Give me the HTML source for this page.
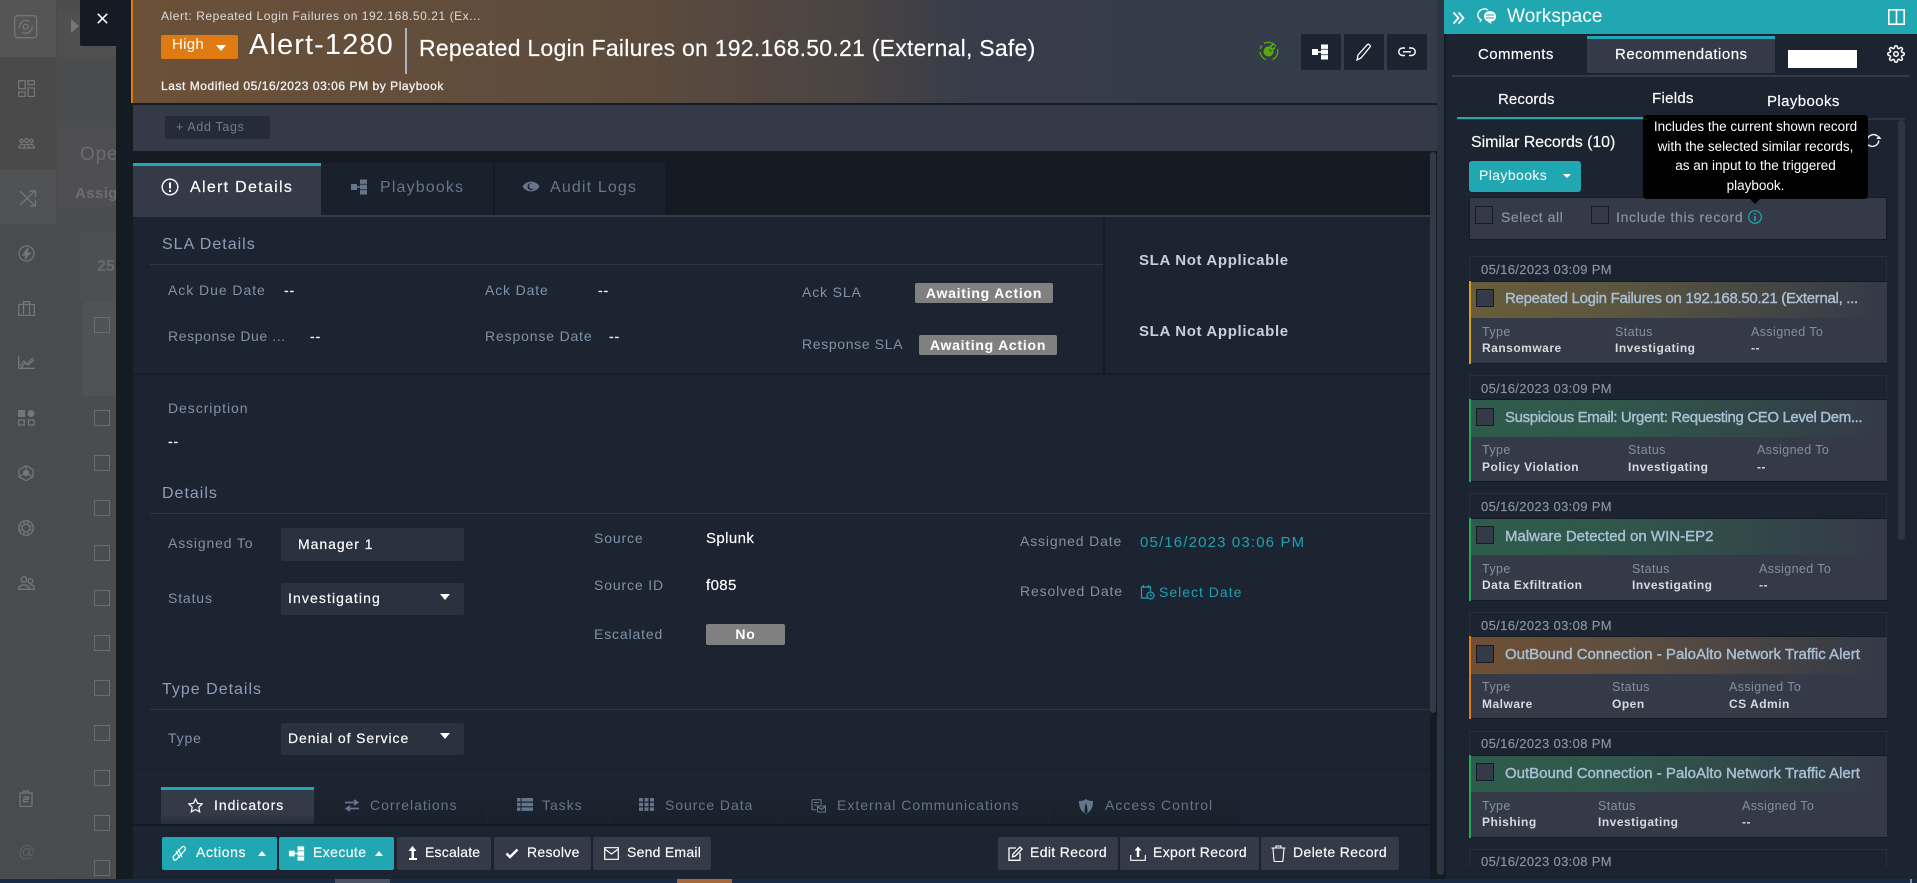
<!DOCTYPE html>
<html lang="en"><head><meta charset="utf-8"><title>Alert-1280</title>
<style>
html,body{margin:0;padding:0;width:1917px;height:883px;overflow:hidden;background:#141b23}
body{position:relative;font-family:"Liberation Sans",sans-serif;color:#fff}
.b,.t,svg{position:absolute}
.t{white-space:nowrap;line-height:20px;height:20px}
.l{font-size:14px;letter-spacing:.85px;color:#8191a6}
.v{font-size:14px;letter-spacing:.8px;color:#fff;-webkit-text-stroke:.15px #fff}
.h{font-size:16px;letter-spacing:1px;color:#8d9eb6}
.tb{font-size:16px;letter-spacing:1.15px;color:#66758a}
.tb2{font-size:14px;letter-spacing:.95px;color:#66758a}
.bd{background:#808080;border-radius:2px;font-size:14px;font-weight:bold;letter-spacing:.75px;text-align:center;line-height:20px;color:#fff}
.btn{background:#343a48;border-radius:2px;height:33px;top:837px}
.bt{font-size:14px;letter-spacing:.4px;color:#fff;top:842px;-webkit-text-stroke:.15px #fff}
.cb{width:14px;height:14px;border:1px solid #6c6d70}
.ck{width:16px;height:16px;border:1px solid #141b23;background:#343a48}
.d{font-size:13px;letter-spacing:.35px;color:#8a93a2;-webkit-text-stroke:.15px #8a93a2}
.ti{font-size:15px;letter-spacing:-.3px;color:#a9bfd3;-webkit-text-stroke:.4px #a9bfd3}
.cl{font-size:12.5px;letter-spacing:.4px;color:#868f9e}
.cv{font-size:12px;font-weight:bold;letter-spacing:.5px;color:#d5dae0}
.si{stroke:#75767a;fill:none;stroke-width:1.3}
</style></head><body>
<svg width="0" height="0" style="position:absolute"><defs>
<symbol id="tree" viewBox="0 0 20 20"><path fill="currentColor" d="M1 7h6v6H1zM7 9.3h4v1.4H7zM10 2.500h7v4.400h-7zM10 7.600h7v4.800h-7zM10 13.100h7v4.400h-7z"/></symbol>
</defs></svg>

<!-- dimmed background app -->
<div class="b" style="left:0;top:0;width:116px;height:879px;background:#4b4c4e"></div>
<div class="b" style="left:0;top:0;width:56px;height:57px;background:#555"></div>
<div class="b" style="left:0;top:57px;width:56px;height:113px;background:#4a4a4b"></div>
<div class="b" style="left:0;top:170px;width:56px;height:54px;background:#515253"></div>
<div class="b" style="left:0;top:224px;width:56px;height:655px;background:#4a4b4c"></div>
<div class="b" style="left:58px;top:11px;width:58px;height:46px;background:#505051"></div>
<div class="b" style="left:58px;top:127px;width:58px;height:80px;background:#4f4f51"></div>
<div class="b" style="left:80px;top:232px;width:36px;height:70px;background:#4e4f50"></div>
<div class="b" style="left:83px;top:302px;width:33px;height:94px;background:#515254"></div>
<div class="b" style="left:71px;top:19px;width:0;height:0;border-left:8px solid #747577;border-top:7px solid transparent;border-bottom:7px solid transparent"></div>
<div class="b" style="left:58px;top:130px;width:58px;height:90px;overflow:hidden">
 <div class="t" style="left:22px;top:13px;font-size:19px;letter-spacing:.8px;color:#6b6c6f;height:24px;line-height:24px">Open</div>
 <div class="t" style="left:17px;top:54px;font-size:15px;font-weight:bold;letter-spacing:.4px;color:#6d6e70">Assigned</div>
</div>
<div class="t" style="left:97px;top:257px;font-size:16px;font-weight:bold;color:#68696b">25</div>
<div class="b cb" style="left:94px;top:317px"></div><div class="b cb" style="left:94px;top:410px"></div>
<div class="b cb" style="left:94px;top:455px"></div><div class="b cb" style="left:94px;top:500px"></div>
<div class="b cb" style="left:94px;top:545px"></div><div class="b cb" style="left:94px;top:590px"></div>
<div class="b cb" style="left:94px;top:635px"></div><div class="b cb" style="left:94px;top:680px"></div>
<div class="b cb" style="left:94px;top:725px"></div><div class="b cb" style="left:94px;top:770px"></div>
<div class="b cb" style="left:94px;top:815px"></div><div class="b cb" style="left:94px;top:860px"></div>

<!-- sidebar icons -->
<svg style="left:14px;top:15px" width="24" height="24" viewBox="0 0 24 24" class="si"><rect x=".7" y=".7" width="22" height="22" rx="3"/><circle cx="11.7" cy="11.7" r="2.500"/><path d="M5.500 13a6.500 6.500 0 0 1 10-6.500M18 10.500a6.500 6.500 0 0 1-10 6.500"/></svg>
<svg style="left:18px;top:80px" width="17" height="17" viewBox="0 0 17 17" class="si"><rect x=".7" y=".7" width="6.500" height="8"/><rect x="10" y=".7" width="6.500" height="4"/><rect x=".7" y="12" width="6.500" height="4.500"/><rect x="10" y="8" width="6.500" height="8.500"/></svg>
<svg style="left:18px;top:138px" width="17" height="11" viewBox="0 0 17 11" class="si"><circle cx="3.500" cy="3" r="1.700"/><circle cx="8.500" cy="2.500" r="1.900"/><circle cx="13.500" cy="3" r="1.700"/><path d="M.7 10c0-4 5-4 5.500-3M6 10c0-5 5-5 5 0M11 7c1-1 5-1 5.500 3M.7 10h15.800"/></svg>
<svg style="left:19px;top:189px" width="18" height="18" viewBox="0 0 18 18" class="si"><path d="M1 2l15 15M1 16L16 2M10 2h6.500v6M16.500 11v6H11"/></svg>
<svg style="left:18px;top:245px" width="17" height="17" viewBox="0 0 17 17" class="si"><circle cx="8.500" cy="8.500" r="7.500"/><path d="M10 3L5 10h3.500L7 14l5-6H8.700z" fill="#75767a"/></svg>
<svg style="left:18px;top:301px" width="17" height="15" viewBox="0 0 17 15" class="si"><rect x=".7" y="3.500" width="15.600" height="11"/><path d="M5.500 3.500V.7h6v2.800M5.500 3.500v11M11.500 3.500v11"/></svg>
<svg style="left:18px;top:356px" width="17" height="13" viewBox="0 0 17 13" class="si"><path d="M.7 0v12.300h16M2 10l4-5 3 3 6-6M3 12l4-5 3 2 6-5"/></svg>
<svg style="left:18px;top:410px" width="17" height="16" viewBox="0 0 17 16" class="si"><rect x="0" y="0" width="7" height="7" fill="#75767a" stroke="none"/><circle cx="13" cy="3.500" r="3.500" fill="#75767a" stroke="none"/><rect x=".7" y="10" width="5.500" height="5"/><rect x="10.500" y="10" width="5.500" height="5"/></svg>
<svg style="left:18px;top:465px" width="16" height="16" viewBox="0 0 16 16" class="si"><path d="M8 .7l7 4v7l-7 4-7-4v-7z"/><circle cx="8" cy="8" r="2.500" fill="#75767a"/><path d="M8 .7v5M1 12l4.500-3M15 12l-4.500-3"/></svg>
<svg style="left:18px;top:520px" width="16" height="16" viewBox="0 0 16 16" class="si"><circle cx="8" cy="8" r="7.300"/><circle cx="8" cy="8" r="3.800"/><path d="M6 .9v3.400M10 .9v3.400M6 11.700v3.400M10 11.700v3.400M.9 6h3.400M.9 10h3.400M11.700 6h3.400M11.700 10h3.400"/></svg>
<svg style="left:18px;top:576px" width="17" height="14" viewBox="0 0 17 14" class="si"><circle cx="6" cy="3.500" r="2.800"/><circle cx="12.500" cy="5" r="2.300"/><path d="M.7 13.300c0-6 10.500-6 10.500 0zM11.500 9c3-1 5 1 5 4.300h-5"/></svg>
<svg style="left:19px;top:790px" width="14" height="17" viewBox="0 0 14 17" class="si"><path d="M1 3h12v12.500a1 1 0 0 1-1 1H2a1 1 0 0 1-1-1zM4.500 3V1h5v2M4.500 7h5v2.200h-5v2.500h5"/></svg>
<div class="t" style="left:18px;top:842px;font-size:17px;color:#5f6062">@</div>

<div class="b" style="left:116px;top:0;width:17px;height:879px;background:#141b23"></div>
<div class="b" style="left:80px;top:0;width:36px;height:46px;background:#141b23;border-radius:0 0 0 2px"></div>
<svg style="left:97px;top:13px" width="11" height="11" viewBox="0 0 11 11"><path d="M.8.8l9.400 9.400M10.200.8L.8 10.200" stroke="#fff" stroke-width="1.500"/></svg>

<!-- modal header -->
<div class="b" style="left:131px;top:0;width:1306px;height:103px;background:linear-gradient(90deg,#6b5138 0,#5c4b3d 39%,#4a4443 55%,#363c49 65%,#343b49 100%)"></div>
<div class="b" style="left:131px;top:0;width:2px;height:103px;background:#e07b14"></div>
<div class="b" style="left:131px;top:103px;width:1306px;height:2px;background:#141b23"></div>
<div class="t" style="left:161px;top:6px;font-size:12px;letter-spacing:.55px;color:#dcdcdc">Alert: Repeated Login Failures on 192.168.50.21 (Ex...</div>
<div class="b" style="left:161px;top:35px;width:77px;height:24px;background:#e07b14;border-radius:2px"></div>
<div class="t" style="left:172px;top:35px;font-size:15px;letter-spacing:.3px">High</div>
<div class="b" style="left:216px;top:45px;border-top:6px solid #fff;border-left:5px solid transparent;border-right:5px solid transparent"></div>
<div class="t" style="left:249px;top:28px;font-size:29px;letter-spacing:1.100px;height:34px;line-height:34px">Alert-1280</div>
<div class="b" style="left:405px;top:28px;width:2px;height:46px;background:#aab4c0"></div>
<div class="t" style="left:419px;top:34px;font-size:23px;letter-spacing:.25px;height:28px;line-height:28px;-webkit-text-stroke:.15px #fff">Repeated Login Failures on 192.168.50.21 (External, Safe)</div>
<div class="t" style="left:161px;top:76px;font-size:12px;letter-spacing:.55px;color:#eee;-webkit-text-stroke:.35px #eee">Last Modified 05/16/2023 03:06 PM by Playbook</div>
<svg style="left:1259px;top:41px" width="20" height="20" viewBox="0 0 20 20"><path d="M5 2.500a9 9 0 0 1 12 3M18.500 8a9 9 0 0 1-5 10.500M7 18.500a9 9 0 0 1-6-7.500M1.200 8A9 9 0 0 1 3 4.500" stroke="#5aa80f" stroke-width="1.300" fill="none"/><circle cx="9.500" cy="10.500" r="5" fill="#5aa80f"/><path d="M11 6l3-2.500M13.500 8.500L16 6.500" stroke="#5aa80f" stroke-width="2"/><path d="M10.500 8.500l2 2" stroke="#343b49" stroke-width="1.200"/></svg>
<div class="b" style="left:1301px;top:34px;width:40px;height:36px;background:#1c2431;border-radius:2px"></div>
<div class="b" style="left:1344px;top:34px;width:40px;height:36px;background:#1c2431;border-radius:2px"></div>
<div class="b" style="left:1387px;top:34px;width:40px;height:36px;background:#1c2431;border-radius:2px"></div>
<svg style="left:1311px;top:42px;color:#fff" width="20" height="20"><use href="#tree"/></svg>
<svg style="left:1356px;top:43px" width="17" height="18" viewBox="0 0 17 18"><path d="M2 12L11.500 1.500c1-1 3.500 1 2.500 2.500L5 15l-4 2z" fill="none" stroke="#fff" stroke-width="1.300"/></svg>
<svg style="left:1398px;top:46px" width="18" height="12" viewBox="0 0 18 12"><path d="M7 2H4.500a3.500 3.500 0 0 0 0 7.500H7M11 2h2.500a3.500 3.500 0 0 1 0 7.500H11M5 5.800h8" fill="none" stroke="#fff" stroke-width="1.400"/></svg>

<!-- tags bar -->
<div class="b" style="left:133px;top:105px;width:1304px;height:46px;background:#343a48"></div>
<div class="b" style="left:165px;top:116px;width:105px;height:23px;background:#252c38;border-radius:2px"></div>
<div class="t" style="left:176px;top:117px;font-size:12.500px;letter-spacing:.65px;color:#6c7a8d">+ Add Tags</div>

<!-- tabs -->
<div class="b" style="left:133px;top:151px;width:1297px;height:66px;background:#141b23"></div>
<div class="b" style="left:133px;top:163px;width:188px;height:52px;background:#343a48;border-top:3px solid #21a7b1;box-sizing:border-box"></div>
<div class="b" style="left:321px;top:163px;width:172px;height:52px;background:#19212c"></div>
<div class="b" style="left:495px;top:163px;width:170px;height:52px;background:#19212c"></div>
<div class="b" style="left:133px;top:215px;width:1297px;height:2px;background:#343a48"></div>
<svg style="left:161px;top:178px" width="18" height="18" viewBox="0 0 18 18"><circle cx="9" cy="9" r="7.800" fill="none" stroke="#fff" stroke-width="1.400"/><path d="M5 4v10M13 4v10" stroke="#343a48" stroke-width="2"/><path d="M9 4.500v6M9 12v2" stroke="#fff" stroke-width="2"/></svg>
<div class="t" style="left:190px;top:178px;font-size:16px;letter-spacing:1.300px;-webkit-text-stroke:.15px #fff">Alert Details</div>
<svg style="left:350px;top:177px;color:#66758a" width="20" height="20"><use href="#tree"/></svg>
<div class="t tb" style="left:380px;top:178px">Playbooks</div>
<svg style="left:522px;top:180px" width="18" height="13" viewBox="0 0 18 13"><path d="M.5 6.500C4 0 14 0 17.500 6.500 14 13 4 13 .5 6.500z" fill="#66758a"/><circle cx="9" cy="6.500" r="3.500" fill="#19212c"/><circle cx="10" cy="6" r="3" fill="#66758a"/></svg>
<div class="t tb" style="left:550px;top:178px">Audit Logs</div>

<!-- scrollable content -->
<div class="b" style="left:133px;top:217px;width:1297px;height:608px;background:#1c2431"></div>
<div class="b" style="left:150px;top:264px;width:953px;height:1px;background:#2e3744"></div>
<div class="b" style="left:1103px;top:218px;width:2px;height:155px;background:#141b23"></div>
<div class="b" style="left:133px;top:373px;width:1297px;height:2px;background:#151c26"></div>
<div class="t h" style="left:162px;top:235px">SLA Details</div>
<div class="t l" style="left:168px;top:280px;letter-spacing:.95px">Ack Due Date</div><div class="t v" style="left:284px;top:280px">--</div>
<div class="t l" style="left:485px;top:280px">Ack Date</div><div class="t v" style="left:598px;top:280px">--</div>
<div class="t l" style="left:802px;top:282px">Ack SLA</div>
<div class="b bd" style="left:915px;top:283px;width:138px;height:20px">Awaiting Action</div>
<div class="t l" style="left:168px;top:326px;letter-spacing:.6px">Response Due ...</div><div class="t v" style="left:310px;top:326px">--</div>
<div class="t l" style="left:485px;top:326px">Response Date</div><div class="t v" style="left:609px;top:326px">--</div>
<div class="t l" style="left:802px;top:334px;letter-spacing:.65px">Response SLA</div>
<div class="b bd" style="left:919px;top:335px;width:138px;height:20px">Awaiting Action</div>
<div class="t" style="left:1139px;top:251px;font-size:15px;font-weight:bold;letter-spacing:.65px;color:#c6d0dc">SLA Not Applicable</div>
<div class="t" style="left:1139px;top:322px;font-size:15px;font-weight:bold;letter-spacing:.65px;color:#c6d0dc">SLA Not Applicable</div>
<div class="t l" style="left:168px;top:398px;letter-spacing:.95px">Description</div>
<div class="t v" style="left:168px;top:431px">--</div>
<div class="t h" style="left:162px;top:484px">Details</div>
<div class="b" style="left:150px;top:513px;width:1280px;height:1px;background:#2e3744"></div>
<div class="t l" style="left:168px;top:533px">Assigned To</div>
<div class="b" style="left:281px;top:528px;width:183px;height:33px;background:#2a3240;border-radius:2px"></div>
<div class="t v" style="left:298px;top:534px;letter-spacing:.95px">Manager 1</div>
<div class="t l" style="left:168px;top:588px">Status</div>
<div class="b" style="left:281px;top:583px;width:183px;height:32px;background:#2a3240;border-radius:2px"></div>
<div class="t v" style="left:288px;top:588px;letter-spacing:1.1px">Investigating</div>
<div class="b" style="left:440px;top:594px;border-top:6px solid #fff;border-left:5px solid transparent;border-right:5px solid transparent"></div>
<div class="t l" style="left:594px;top:528px">Source</div><div class="t v" style="left:706px;top:529px;font-size:15px;letter-spacing:.4px">Splunk</div>
<div class="t l" style="left:594px;top:575px">Source ID</div><div class="t v" style="left:706px;top:576px;font-size:15px;letter-spacing:.4px">f085</div>
<div class="t l" style="left:594px;top:624px">Escalated</div>
<div class="b bd" style="left:706px;top:624px;width:79px;height:21px;line-height:21px">No</div>
<div class="t l" style="left:1020px;top:531px">Assigned Date</div>
<div class="t" style="left:1140px;top:533px;font-size:15px;letter-spacing:1.15px;color:#21a0b0">05/16/2023 03:06 PM</div>
<div class="t l" style="left:1020px;top:581px">Resolved Date</div>
<svg style="left:1140px;top:584px" width="15" height="17" viewBox="0 0 15 17"><path d="M8 14H1.500V3h9v4M3.500 1v3M8.500 1v3" fill="none" stroke="#21a0b0" stroke-width="1.200"/><circle cx="10.500" cy="11.500" r="3.500" fill="none" stroke="#21a0b0" stroke-width="1.200"/><path d="M10.500 9.800v2h1.500" fill="none" stroke="#21a0b0"/></svg>
<div class="t" style="left:1159px;top:582px;font-size:14px;letter-spacing:1px;color:#21a0b0">Select Date</div>
<div class="t h" style="left:162px;top:680px">Type Details</div>
<div class="b" style="left:150px;top:709px;width:1280px;height:1px;background:#2e3744"></div>
<div class="t l" style="left:168px;top:728px">Type</div>
<div class="b" style="left:281px;top:723px;width:183px;height:32px;background:#2a3240;border-radius:2px"></div>
<div class="t v" style="left:288px;top:728px;letter-spacing:.9px">Denial of Service</div>
<div class="b" style="left:440px;top:733px;border-top:6px solid #fff;border-left:5px solid transparent;border-right:5px solid transparent"></div>
<div class="b" style="left:133px;top:769px;width:1297px;height:1px;background:#171e29"></div>

<!-- lower tabs -->
<div class="b" style="left:314px;top:787px;width:172px;height:37px;background:linear-gradient(#1c2431,#19212c)"></div>
<div class="b" style="left:488px;top:787px;width:121px;height:37px;background:linear-gradient(#1c2431,#19212c)"></div>
<div class="b" style="left:611px;top:787px;width:171px;height:37px;background:linear-gradient(#1c2431,#19212c)"></div>
<div class="b" style="left:783px;top:787px;width:265px;height:37px;background:linear-gradient(#1c2431,#19212c)"></div>
<div class="b" style="left:1050px;top:787px;width:190px;height:37px;background:linear-gradient(#1c2431,#19212c)"></div>
<div class="b" style="left:161px;top:787px;width:153px;height:37px;background:linear-gradient(#343a48 70%,#272e3b);border-top:3px solid #21a7b1;box-sizing:border-box"></div>
<svg style="left:188px;top:798px" width="15" height="15" viewBox="0 0 15 15"><path d="M7.500 1l2 4.300 4.700.6-3.400 3.200.9 4.700-4.200-2.300-4.200 2.300.9-4.700L.8 5.900l4.700-.6z" fill="none" stroke="#fff" stroke-width="1.200"/></svg>
<div class="t" style="left:214px;top:795px;font-size:14px;letter-spacing:.95px;-webkit-text-stroke:.15px #fff">Indicators</div>
<svg style="left:344px;top:799px" width="16" height="13" viewBox="0 0 16 13"><path d="M1 3.500h12M10 1l3.500 2.500L10 6M15 9.500H3M6 7L2.500 9.500 6 12" fill="none" stroke="#66758a" stroke-width="1.800"/></svg>
<div class="t tb2" style="left:370px;top:795px;letter-spacing:1px">Correlations</div>
<svg style="left:517px;top:798px" width="16" height="13" viewBox="0 0 16 13"><path fill="#66758a" d="M0 0h3.500v3.500H0zM4.500 0H16v3.500H4.500zM0 4.700h3.500v3.500H0zM4.500 4.700H16v3.500H4.500zM0 9.400h3.500v3.500H0zM4.500 9.400H16v3.500H4.500z"/></svg>
<div class="t tb2" style="left:542px;top:795px">Tasks</div>
<svg style="left:639px;top:798px" width="15" height="13" viewBox="0 0 15 13"><path fill="#66758a" d="M0 0h4v3.500H0zM5.500 0h4v3.500h-4zM11 0h4v3.500h-4zM0 4.700h4v3.500H0zM5.500 4.700h4v3.500h-4zM11 4.700h4v3.500h-4zM0 9.400h4v3.500H0zM5.500 9.400h4v3.500h-4zM11 9.400h4v3.500h-4z"/></svg>
<div class="t tb2" style="left:665px;top:795px">Source Data</div>
<svg style="left:811px;top:799px" width="15" height="14" viewBox="0 0 15 14"><path d="M1 .7h9v5M1 .7v10h4M3 3.500h5M3 6h3M6.500 7h8v6h-8zM6.500 7.500l4 3 4-3" fill="none" stroke="#66758a" stroke-width="1.100"/></svg>
<div class="t tb2" style="left:837px;top:795px;letter-spacing:1px">External Communications</div>
<svg style="left:1078px;top:799px" width="16" height="15" viewBox="0 0 16 15"><path d="M1 2c3 0 5-.5 7-2 2 1.500 4 2 7 2 0 5-1 10-7 13C2 12 1 7 1 2z" fill="#66758a"/><path d="M8 4c1 2 1.500 6 1.500 10h-3C6.500 10 7 6 8 4z" fill="#19212c"/></svg>
<div class="t tb2" style="left:1105px;top:795px;letter-spacing:1px">Access Control</div>

<!-- footer -->
<div class="b" style="left:133px;top:824px;width:1297px;height:2px;background:#141b23"></div>
<div class="b" style="left:133px;top:826px;width:1297px;height:53px;background:#1c2431"></div>
<div class="b btn" style="left:162px;width:115px;background:#21a7b1"></div>
<svg style="left:171px;top:844px" width="17" height="19" viewBox="0 0 17 19"><path d="M3 16l-1-3 9-10c2-2 4 1 3 3L5 16zM7 5l4 8M5 7l4 7" fill="none" stroke="#fff" stroke-width="1.200"/></svg>
<div class="t bt" style="left:196px;letter-spacing:.6px">Actions</div>
<div class="b" style="left:258px;top:851px;border-bottom:5px solid #fff;border-left:4px solid transparent;border-right:4px solid transparent"></div>
<div class="b btn" style="left:279px;width:115px;background:#21a7b1"></div>
<svg style="left:288px;top:844px;color:#fff" width="19" height="19"><use href="#tree"/></svg>
<div class="t bt" style="left:313px">Execute</div>
<div class="b" style="left:375px;top:851px;border-bottom:5px solid #fff;border-left:4px solid transparent;border-right:4px solid transparent"></div>
<div class="b btn" style="left:397px;width:94px"></div>
<svg style="left:407px;top:846px" width="11" height="15" viewBox="0 0 11 15"><path d="M5.500 0l4 5H7v7h3v2H2v-2h2.500V5H1.500z" fill="#fff"/></svg>
<div class="t bt" style="left:425px;letter-spacing:.2px">Escalate</div>
<div class="b btn" style="left:494px;width:97px"></div>
<svg style="left:505px;top:848px" width="14" height="11" viewBox="0 0 14 11"><path d="M1.500 5.500l3.500 3.500 7.500-7.500" fill="none" stroke="#fff" stroke-width="2.500"/></svg>
<div class="t bt" style="left:527px;letter-spacing:.3px">Resolve</div>
<div class="b btn" style="left:593px;width:118px"></div>
<svg style="left:604px;top:847px" width="15" height="13" viewBox="0 0 15 13"><path d="M.7.7h13.600v11.600H.7zM.7 2l6.800 5 6.800-5" fill="none" stroke="#fff" stroke-width="1.200"/></svg>
<div class="t bt" style="left:627px;letter-spacing:.25px">Send Email</div>
<div class="b btn" style="left:998px;width:120px"></div>
<svg style="left:1008px;top:846px" width="15" height="15" viewBox="0 0 15 15"><path d="M8 2H1v12.300h11V7M5 8l-.5 2.800L7.300 10 14 3l-2-2z" fill="none" stroke="#fff" stroke-width="1.300"/></svg>
<div class="t bt" style="left:1030px;letter-spacing:.35px">Edit Record</div>
<div class="b btn" style="left:1120px;width:139px"></div>
<svg style="left:1130px;top:846px" width="16" height="15" viewBox="0 0 16 15"><path d="M.7 9v5.300h14.600V9" fill="none" stroke="#fff" stroke-width="1.100"/><path d="M8 .5l3.500 4H9.200V11H6.800V4.500H4.500z" fill="#fff"/></svg>
<div class="t bt" style="left:1153px;letter-spacing:.35px">Export Record</div>
<div class="b btn" style="left:1261px;width:138px"></div>
<svg style="left:1271px;top:845px" width="15" height="17" viewBox="0 0 15 17"><path d="M.5 3h14M5 3V1h5v2M2 3l1 12.500c0 .5.500 1 1 1h7c.5 0 1-.5 1-1L13 3" fill="none" stroke="#fff" stroke-width="1.100"/></svg>
<div class="t bt" style="left:1293px;letter-spacing:.35px">Delete Record</div>

<!-- scrollbars -->
<div class="b" style="left:1430px;top:152px;width:6px;height:561px;background:#343a48;border-radius:3px"></div>
<div class="b" style="left:1430px;top:103px;width:7px;height:2px;background:#141b23"></div>
<div class="b" style="left:1437px;top:0;width:7px;height:875px;background:#2d3543;border-radius:0 0 4px 4px"></div>

<!-- workspace panel -->
<div class="b" style="left:1444px;top:0;width:473px;height:879px;background:#1c2431"></div>
<div class="b" style="left:1444px;top:34px;width:2px;height:845px;background:#141b23"></div>
<div class="b" style="left:1444px;top:0;width:473px;height:34px;background:#21a7b1"></div>
<svg style="left:1452px;top:11px" width="13" height="14" viewBox="0 0 13 14"><path d="M1.500 1.500L6.500 7l-5 5.500M6.500 1.500l5 5.500-5 5.500" fill="none" stroke="#fff" stroke-width="1.800"/></svg>
<svg style="left:1477px;top:8px" width="20" height="17" viewBox="0 0 20 17"><path d="M5 12C1 11 0 7 1.500 4.500 3.500 1 8 0 11 2M3 14l1-3" fill="none" stroke="#fff" stroke-width="1.400"/><path d="M7 8c0-3 3-5 6-5s6 2 6 5.500c0 3-2 5-5 5 0 1 1 2 1 2s-3 0-4-2C9 13 7 11 7 8z" fill="#fff"/><path d="M9 7h8M9 10h8" stroke="#21a7b1"/></svg>
<div class="t" style="left:1507px;top:5px;font-size:19px;letter-spacing:.1px;height:24px;line-height:24px">Workspace</div>
<svg style="left:1888px;top:9px" width="17" height="16" viewBox="0 0 17 16"><path d="M.8.8h15.400v14.400H.8zM8.500.8v14.400" fill="none" stroke="#fff" stroke-width="1.600"/></svg>
<div class="b" style="left:1587px;top:36px;width:188px;height:37px;background:#343a48;border-top:3px solid #21a7b1;box-sizing:border-box"></div>
<div class="t" style="left:1478px;top:45px;font-size:15px;letter-spacing:.4px;-webkit-text-stroke:.15px #fff">Comments</div>
<div class="t" style="left:1615px;top:45px;font-size:15px;letter-spacing:.5px;-webkit-text-stroke:.15px #fff">Recommendations</div>
<div class="b" style="left:1788px;top:50px;width:69px;height:18px;background:#fff"></div>
<svg style="left:1887px;top:45px" width="18" height="18" viewBox="0 0 24 24"><path d="M12 15a3 3 0 1 0 0-6 3 3 0 0 0 0 6z" fill="none" stroke="#fff" stroke-width="2"/><path d="M19.400 15a1.700 1.700 0 0 0 .3 1.800l.1.100a2 2 0 1 1-2.800 2.800l-.1-.1a1.700 1.700 0 0 0-2.900 1.200V21a2 2 0 1 1-4 0v-.1a1.700 1.700 0 0 0-2.900-1.200l-.1.100a2 2 0 1 1-2.800-2.800l.1-.1a1.700 1.700 0 0 0-1.200-2.900H3a2 2 0 1 1 0-4h.1a1.700 1.700 0 0 0 1.200-2.900l-.1-.1a2 2 0 1 1 2.800-2.800l.1.100a1.700 1.700 0 0 0 1.900.3H9a1.700 1.700 0 0 0 1-1.500V3a2 2 0 1 1 4 0v.1a1.700 1.700 0 0 0 2.900 1.200l.1-.1a2 2 0 1 1 2.800 2.800l-.1.100a1.700 1.700 0 0 0 1.200 2.900h.1a2 2 0 1 1 0 4h-.1a1.700 1.700 0 0 0-1.500 1z" fill="none" stroke="#fff" stroke-width="2"/></svg>
<div class="b" style="left:1452px;top:75px;width:458px;height:2px;background:#343a48"></div>
<div class="t" style="left:1498px;top:90px;font-size:15px;letter-spacing:.1px;-webkit-text-stroke:.15px #fff">Records</div>
<div class="t" style="left:1652px;top:89px;font-size:15px;letter-spacing:.3px;-webkit-text-stroke:.15px #fff">Fields</div>
<div class="t" style="left:1767px;top:92px;font-size:15px;letter-spacing:.4px;-webkit-text-stroke:.15px #fff">Playbooks</div>
<div class="b" style="left:1457px;top:118px;width:448px;height:2px;background:#2d3543"></div>
<div class="b" style="left:1457px;top:117px;width:275px;height:2px;background:#21a7b1"></div>
<div class="b" style="left:1898px;top:120px;width:7px;height:420px;background:#2d3543;border-radius:4px"></div>
<div class="t" style="left:1471px;top:133px;font-size:16px;letter-spacing:-.08px;-webkit-text-stroke:.15px #fff">Similar Records (10)</div>
<svg style="left:1864px;top:132px" width="18" height="17" viewBox="0 0 17 16"><path d="M3 8a6 6 0 0 1 10-4M14 8a6 6 0 0 1-10 4" fill="none" stroke="#fff" stroke-width="1.300"/><path d="M11.500 6.500h5l-2.500-3z" fill="#fff"/></svg>
<div class="b" style="left:1469px;top:161px;width:112px;height:31px;background:#21a7b1;border-radius:3px"></div>
<div class="t" style="left:1479px;top:165px;font-size:14px;letter-spacing:.4px">Playbooks</div>
<div class="b" style="left:1563px;top:174px;border-top:4px solid #fff;border-left:4px solid transparent;border-right:4px solid transparent"></div>
<div class="b" style="left:1469px;top:197px;width:416px;height:41px;background:#343a48;border:1px solid #141b23"></div>
<div class="b ck" style="left:1475px;top:206px"></div>
<div class="t" style="left:1501px;top:207px;font-size:14px;letter-spacing:.55px;color:#8a93a2;-webkit-text-stroke:.2px #8a93a2">Select all</div>
<div class="b ck" style="left:1591px;top:206px"></div>
<div class="t" style="left:1616px;top:207px;font-size:14px;letter-spacing:.68px;color:#8a93a2;-webkit-text-stroke:.2px #8a93a2">Include this record</div>
<svg style="left:1748px;top:210px" width="14" height="14" viewBox="0 0 14 14"><circle cx="7" cy="7" r="6.300" fill="none" stroke="#21a7b1" stroke-width="1.200"/><path d="M7 6v5M7 3v1.500" stroke="#21a7b1" stroke-width="1.500"/></svg>

<!-- cards -->
<div class="b" style="left:1469px;top:256px;width:416px;height:25px;border:1px solid #272f3c;border-bottom:0"></div>
<div class="t d" style="left:1481px;top:260px">05/16/2023 03:09 PM</div>
<div class="b" style="left:1469px;top:281px;width:418px;height:83px;background:#343a48;border-top:1px solid #141b23;border-bottom:1px solid #141b23;box-sizing:border-box"></div>
<div class="b" style="left:1469px;top:282px;width:418px;height:36px;background:linear-gradient(90deg,#685d3b 0,#5c5640 35%,#343a48 98%)"></div>
<div class="b" style="left:1469px;top:281px;width:2px;height:83px;background:#d4a017"></div>
<div class="b ck" style="left:1476px;top:289px"></div>
<div class="t ti" style="left:1505px;top:289px">Repeated Login Failures on 192.168.50.21 (External, ...</div>
<div class="t cl" style="left:1482px;top:322px">Type</div><div class="t cv" style="left:1482px;top:338px">Ransomware</div>
<div class="t cl" style="left:1615px;top:322px">Status</div><div class="t cv" style="left:1615px;top:338px">Investigating</div>
<div class="t cl" style="left:1751px;top:322px">Assigned To</div><div class="t cv" style="left:1751px;top:338px">--</div>

<div class="b" style="left:1469px;top:375px;width:416px;height:24px;border:1px solid #272f3c;border-bottom:0"></div>
<div class="t d" style="left:1481px;top:379px">05/16/2023 03:09 PM</div>
<div class="b" style="left:1469px;top:399px;width:418px;height:83px;background:#343a48;border-top:1px solid #141b23;border-bottom:1px solid #141b23;box-sizing:border-box"></div>
<div class="b" style="left:1469px;top:400px;width:418px;height:37px;background:linear-gradient(90deg,#2e5c4c 0,#30574b 35%,#343a48 98%)"></div>
<div class="b" style="left:1469px;top:399px;width:2px;height:83px;background:#25a85a"></div>
<div class="b ck" style="left:1476px;top:408px"></div>
<div class="t ti" style="left:1505px;top:408px;letter-spacing:-.37px">Suspicious Email: Urgent: Requesting CEO Level Dem...</div>
<div class="t cl" style="left:1482px;top:440px">Type</div><div class="t cv" style="left:1482px;top:457px">Policy Violation</div>
<div class="t cl" style="left:1628px;top:440px">Status</div><div class="t cv" style="left:1628px;top:457px">Investigating</div>
<div class="t cl" style="left:1757px;top:440px">Assigned To</div><div class="t cv" style="left:1757px;top:457px">--</div>

<div class="b" style="left:1469px;top:493px;width:416px;height:25px;border:1px solid #272f3c;border-bottom:0"></div>
<div class="t d" style="left:1481px;top:497px">05/16/2023 03:09 PM</div>
<div class="b" style="left:1469px;top:518px;width:418px;height:83px;background:#343a48;border-top:1px solid #141b23;border-bottom:1px solid #141b23;box-sizing:border-box"></div>
<div class="b" style="left:1469px;top:519px;width:418px;height:36px;background:linear-gradient(90deg,#2e5c4c 0,#30574b 35%,#343a48 98%)"></div>
<div class="b" style="left:1469px;top:518px;width:2px;height:83px;background:#25a85a"></div>
<div class="b ck" style="left:1476px;top:526px"></div>
<div class="t ti" style="left:1505px;top:527px;letter-spacing:0">Malware Detected on WIN-EP2</div>
<div class="t cl" style="left:1482px;top:559px">Type</div><div class="t cv" style="left:1482px;top:575px">Data Exfiltration</div>
<div class="t cl" style="left:1632px;top:559px">Status</div><div class="t cv" style="left:1632px;top:575px">Investigating</div>
<div class="t cl" style="left:1759px;top:559px">Assigned To</div><div class="t cv" style="left:1759px;top:575px">--</div>

<div class="b" style="left:1469px;top:612px;width:416px;height:24px;border:1px solid #272f3c;border-bottom:0"></div>
<div class="t d" style="left:1481px;top:616px">05/16/2023 03:08 PM</div>
<div class="b" style="left:1469px;top:636px;width:418px;height:83px;background:#343a48;border-top:1px solid #141b23;border-bottom:1px solid #141b23;box-sizing:border-box"></div>
<div class="b" style="left:1469px;top:637px;width:418px;height:37px;background:linear-gradient(90deg,#6e4f35 0,#5f4f3f 35%,#343a48 98%)"></div>
<div class="b" style="left:1469px;top:636px;width:2px;height:83px;background:#e07b14"></div>
<div class="b ck" style="left:1476px;top:645px"></div>
<div class="t ti" style="left:1505px;top:645px;letter-spacing:0">OutBound Connection - PaloAlto Network Traffic Alert</div>
<div class="t cl" style="left:1482px;top:677px">Type</div><div class="t cv" style="left:1482px;top:694px">Malware</div>
<div class="t cl" style="left:1612px;top:677px">Status</div><div class="t cv" style="left:1612px;top:694px">Open</div>
<div class="t cl" style="left:1729px;top:677px">Assigned To</div><div class="t cv" style="left:1729px;top:694px">CS Admin</div>

<div class="b" style="left:1469px;top:731px;width:416px;height:25px;border:1px solid #272f3c;border-bottom:0"></div>
<div class="t d" style="left:1481px;top:734px">05/16/2023 03:08 PM</div>
<div class="b" style="left:1469px;top:755px;width:418px;height:83px;background:#343a48;border-top:1px solid #141b23;border-bottom:1px solid #141b23;box-sizing:border-box"></div>
<div class="b" style="left:1469px;top:756px;width:418px;height:36px;background:linear-gradient(90deg,#2e5c4c 0,#30574b 35%,#343a48 98%)"></div>
<div class="b" style="left:1469px;top:755px;width:2px;height:83px;background:#25a85a"></div>
<div class="b ck" style="left:1476px;top:763px"></div>
<div class="t ti" style="left:1505px;top:764px;letter-spacing:0">OutBound Connection - PaloAlto Network Traffic Alert</div>
<div class="t cl" style="left:1482px;top:796px">Type</div><div class="t cv" style="left:1482px;top:812px">Phishing</div>
<div class="t cl" style="left:1598px;top:796px">Status</div><div class="t cv" style="left:1598px;top:812px">Investigating</div>
<div class="t cl" style="left:1742px;top:796px">Assigned To</div><div class="t cv" style="left:1742px;top:812px">--</div>

<div class="b" style="left:1469px;top:849px;width:416px;height:17px;border:1px solid #272f3c;border-bottom:0;overflow:hidden">
 <div class="t d" style="left:11px;top:2px">05/16/2023 03:08 PM</div>
</div>

<!-- tooltip -->
<div class="b" style="left:1643px;top:115px;width:225px;height:84px;background:#000;border-radius:4px"></div>
<div class="b" style="left:1750px;top:199px;border-top:5px solid #000;border-left:5px solid transparent;border-right:5px solid transparent"></div>
<div class="b" style="left:1643px;top:117px;width:225px;text-align:center;font-size:13.500px;line-height:19.500px;color:#fff">Includes the current shown record<br>with the selected similar records,<br>as an input to the triggered<br>playbook.</div>

<!-- bottom strip -->
<div class="b" style="left:0;top:879px;width:1917px;height:4px;background:#1a2a44"></div>
<div class="b" style="left:335px;top:879px;width:55px;height:4px;background:#4a5163"></div>
<div class="b" style="left:677px;top:879px;width:55px;height:4px;background:#a8683a"></div>
<div class="b" style="left:1910px;top:879px;width:2px;height:4px;background:#8a93a2"></div>
</body></html>
